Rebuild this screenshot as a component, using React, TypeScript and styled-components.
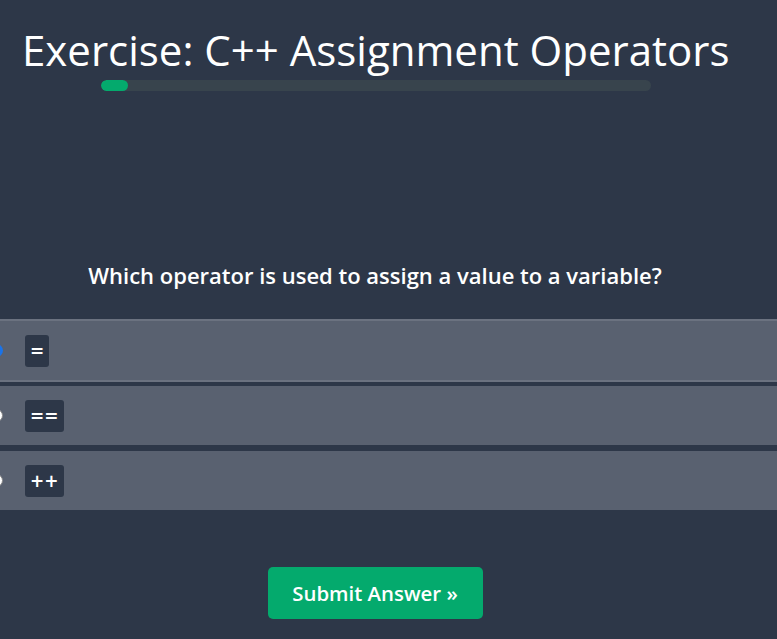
import React from "react";
import styled, { createGlobalStyle } from "styled-components";

const Global = createGlobalStyle`
  html, body { margin: 0; padding: 0; background: #2d3748; overflow: hidden; }
  body { font-family: "Open Sans", sans-serif; }
`;

const Page = styled.div`
  width: 750px;
  height: 639px;
  background: #2d3748;
  color: #fff;
  display: flex;
  flex-direction: column;
`;

const Title = styled.h1`
  margin: 0;
  padding: 24px 0 0 22px;
  font-family: "Open Sans", sans-serif;
  font-weight: 400;
  font-size: 42px;
  line-height: 52px;
  white-space: nowrap;
`;

const Track = styled.div`
  margin: 4px 0 0 101px;
  width: 550px;
  height: 11px;
  border-radius: 6px;
  background: #38444d;
  overflow: hidden;
`;

const Fill = styled.div`
  height: 100%;
  border-radius: 6px;
  background: #04aa6d;
`;

const Question = styled.p`
  margin: 170px 0 0;
  text-align: center;
  font-family: "Open Sans", sans-serif;
  font-weight: 600;
  font-size: 22px;
  line-height: 28px;
  white-space: nowrap;
`;

const Options = styled.div`
  margin: 30px 0 0 -18px;
  width: 820px;
  display: flex;
  flex-direction: column;
`;

const Row = styled.label<{ $active?: boolean; $gap: number }>`
  display: flex;
  align-items: center;
  gap: 22px;
  height: 59px;
  box-sizing: content-box;
  padding-left: 8px;
  background: #596170;
  border-top: ${(p) => (p.$active ? "2px solid #6b7280" : "0")};
  border-bottom: ${(p) => (p.$active ? "2px solid #6b7280" : "0")};
  margin-bottom: ${(p) => p.$gap}px;
`;

const Radio = styled.span<{ $checked?: boolean }>`
  width: 13px;
  height: 13px;
  border-radius: 50%;
  box-sizing: border-box;
  background: ${(p) => (p.$checked ? "#1a73e8" : "#fff")};
  border: ${(p) => (p.$checked ? "3px solid #1a73e8" : "1px solid #888")};
  box-shadow: ${(p) => (p.$checked ? "inset 0 0 0 2px #fff" : "none")};
  flex: none;
`;

const Code = styled.span`
  display: inline-flex;
  align-items: center;
  justify-content: center;
  height: 32px;
  padding: 0 5px;
  min-width: 13px;
  border-radius: 3px;
  background: #2d3748;
  color: #fff;
  font-family: "DejaVu Sans", sans-serif;
  font-weight: 700;
  font-size: 17px;
`;

const Footer = styled.div`
  display: flex;
  justify-content: center;
  margin-top: 57px;
`;

const Submit = styled.button`
  width: 215px;
  height: 52px;
  border: 0;
  border-radius: 5px;
  background: #04aa6d;
  color: #fff;
  font-family: "Open Sans", sans-serif;
  font-weight: 600;
  font-size: 20.4px;
  cursor: pointer;
`;

const options = [
  { code: "=", checked: true, gap: 4 },
  { code: "==", checked: false, gap: 6 },
  { code: "++", checked: false, gap: 0 },
];

export default function App() {
  return (
    <>
      <Global />
      <Page>
        <Title>Exercise: C++ Assignment Operators</Title>
        <Track>
          <Fill style={{ width: `${(27 / 550) * 100}%` }} />
        </Track>
        <Question>Which operator is used to assign a value to a variable?</Question>
        <Options>
          {options.map((o) => (
            <Row key={o.code} $active={o.checked} $gap={o.gap}>
              <Radio $checked={o.checked} />
              <Code>{o.code}</Code>
            </Row>
          ))}
        </Options>
        <Footer>
          <Submit>Submit Answer »</Submit>
        </Footer>
      </Page>
    </>
  );
}
